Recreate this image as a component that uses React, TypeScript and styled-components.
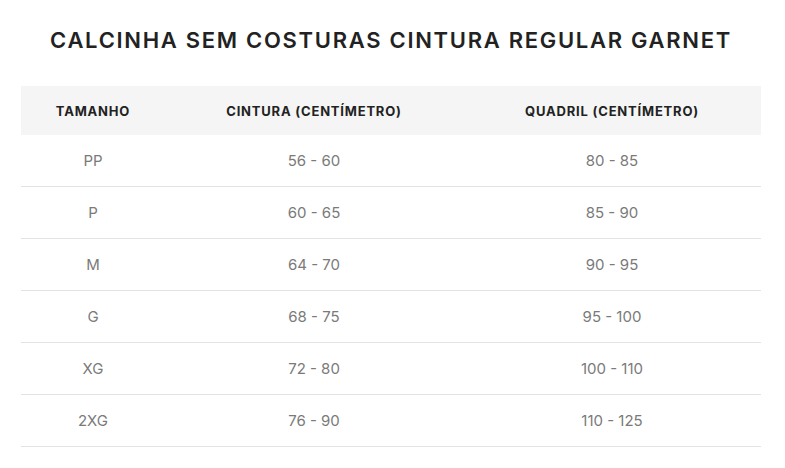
import styled, { createGlobalStyle } from 'styled-components';

const GlobalStyle = createGlobalStyle`
	body {
		margin: 0;
		background: #ffffff;
		font-family: "Inter", "Liberation Sans", sans-serif;
	}
`;

const Page = styled.div`
	padding: 0 24px 0 21px;
	display: flex;
	flex-direction: column;
	align-items: center;
`;

const Title = styled.h1`
	margin: 25px 0 0;
	height: 61px;
	font-size: 22px;
	line-height: 30px;
	font-weight: 600;
	letter-spacing: 1.7px;
	color: #222222;
	text-align: center;
`;

const Table = styled.div`
	width: 740px;
	display: flex;
	flex-direction: column;
`;

const Row = styled.div<{ $head?: boolean }>`
	display: grid;
	grid-template-columns: 144px 1fr 1fr;
	align-items: center;
	height: ${p => (p.$head ? '49px' : '51px')};
	background: ${p => (p.$head ? '#f5f5f5' : 'transparent')};
	border-bottom: ${p => (p.$head ? 'none' : '1px solid #e3e3e3')};
`;

const HeadCell = styled.div`
	text-align: center;
	font-size: 13px;
	font-weight: 700;
	letter-spacing: 0.8px;
	color: #222222;
`;

const Cell = styled.div`
	text-align: center;
	font-size: 15px;
	font-weight: 400;
	color: #7a7a7a;
`;

const sizes = [
	{ size: 'PP', waist: '56 - 60', hip: '80 - 85' },
	{ size: 'P', waist: '60 - 65', hip: '85 - 90' },
	{ size: 'M', waist: '64 - 70', hip: '90 - 95' },
	{ size: 'G', waist: '68 - 75', hip: '95 - 100' },
	{ size: 'XG', waist: '72 - 80', hip: '100 - 110' },
	{ size: '2XG', waist: '76 - 90', hip: '110 - 125' },
];

const App = () => {
	return (
		<Page>
			<GlobalStyle />
			<Title>CALCINHA SEM COSTURAS CINTURA REGULAR GARNET</Title>
			<Table>
				<Row $head>
					<HeadCell>TAMANHO</HeadCell>
					<HeadCell>CINTURA (CENTÍMETRO)</HeadCell>
					<HeadCell>QUADRIL (CENTÍMETRO)</HeadCell>
				</Row>
				{sizes.map(row => (
					<Row key={row.size}>
						<Cell>{row.size}</Cell>
						<Cell>{row.waist}</Cell>
						<Cell>{row.hip}</Cell>
					</Row>
				))}
			</Table>
		</Page>
	);
};

export default App;
